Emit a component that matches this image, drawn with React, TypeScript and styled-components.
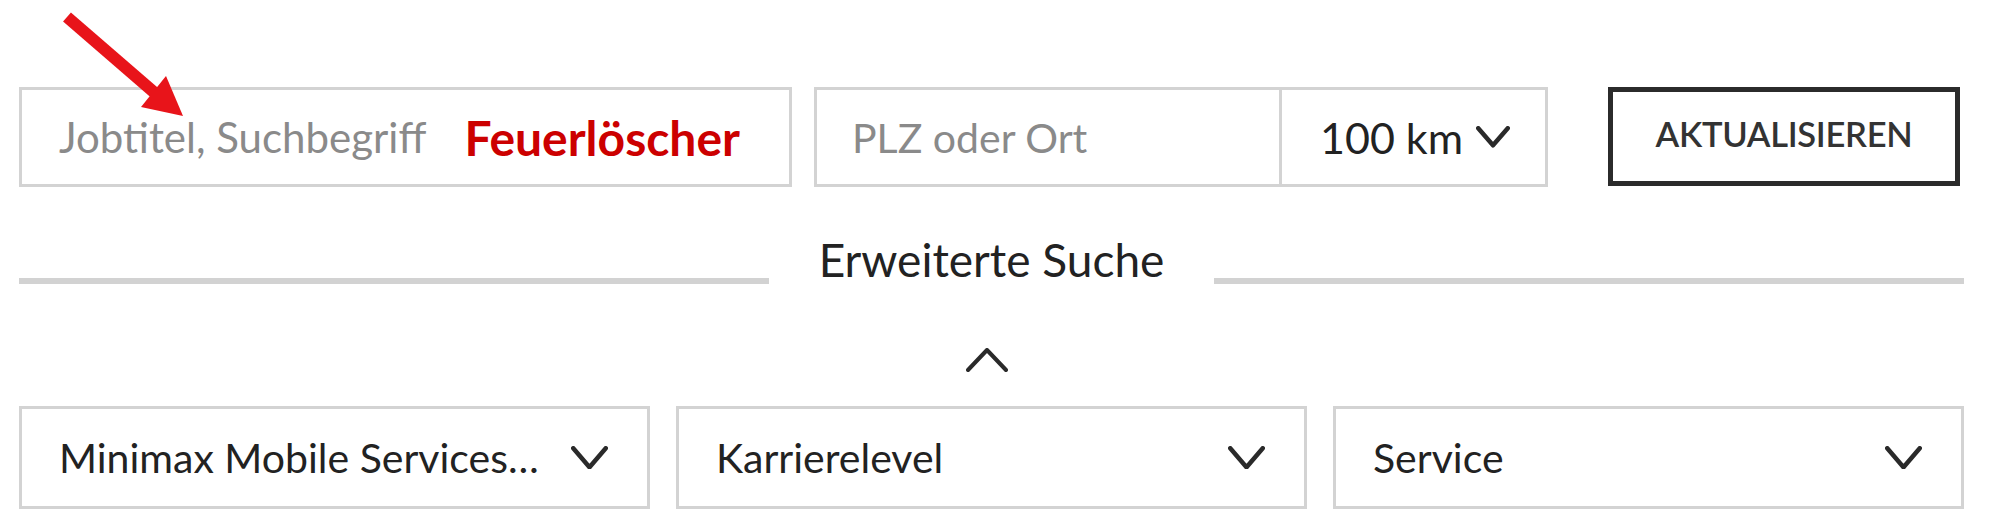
import React from "react";
import styled, { createGlobalStyle } from "styled-components";

const Global = createGlobalStyle`
  html, body { margin: 0; padding: 0; background: #ffffff; }
  body { font-family: "Lato", "Open Sans", sans-serif; color: #222222; }
  * { box-sizing: border-box; }
`;

const Page = styled.div`
  position: relative;
  width: 2000px;
  height: 532px;
  padding: 87px 0 0 19px;
  overflow: hidden;
`;

const Content = styled.div`
  width: 1945px;
  display: flex;
  flex-direction: column;
`;

const TopRow = styled.div`
  display: flex;
  align-items: stretch;
  height: 100px;
`;

const Field = styled.div<{ $w: number }>`
  width: ${(p) => p.$w}px;
  border: 3px solid #d3d3d3;
  display: flex;
  align-items: center;
  padding-left: 37px;
  font-size: 42px;
  white-space: nowrap;
`;

const Placeholder = styled.span`
  color: #8a8a8a;
`;

const Highlight = styled.span`
  color: #cc0000;
  font-weight: 700;
  font-size: 48px;
  margin-left: 38px;
`;

const LocationGroup = styled.div`
  display: flex;
  margin-left: 22px;
  border: 3px solid #d3d3d3;
`;

const LocationInput = styled.div`
  width: 465px;
  display: flex;
  align-items: center;
  padding-left: 35px;
  font-size: 41px;
  color: #8a8a8a;
  border-right: 3px solid #d3d3d3;
`;

const Radius = styled.div`
  width: 263px;
  display: flex;
  align-items: center;
  padding-left: 38px;
  gap: 13px;
  font-size: 43px;
  color: #222;
`;

const UpdateButton = styled.button`
  margin-left: 60px;
  width: 352px;
  height: 99px;
  border: 5px solid #2b2b2b;
  background: #fff;
  font-family: "Lato", sans-serif;
  font-weight: 600;
  font-size: 34.5px;
  color: #333;
  letter-spacing: -0.3px;
  padding: 0 0 6px 0;
`;

const DividerRow = styled.div`
  display: flex;
  align-items: center;
  margin-top: 42px;
  height: 60px;
`;

const Line = styled.div`
  flex: 1;
  height: 6px;
  background: #d2d2d2;
  margin-top: 44px;
`;

const DividerLabel = styled.div`
  font-size: 46px;
  color: #222;
  padding: 0 50px;
  white-space: nowrap;
`;

const ToggleRow = styled.div`
  display: flex;
  justify-content: center;
  padding-right: 10px;
  margin-top: 59px;
  height: 28px;
`;

const BottomRow = styled.div`
  display: grid;
  grid-template-columns: repeat(3, minmax(0, 1fr));
  gap: 26px;
  margin-top: 30px;
`;

const SelectBox = styled.div`
  min-width: 0;
  height: 103px;
  border: 3px solid #d3d3d3;
  display: flex;
  align-items: center;
  padding: 0 39px 0 37px;
  font-size: 41px;
  color: #222;
  gap: 12px;
`;

const SelectText = styled.span`
  flex: 1;
  min-width: 0;
  white-space: nowrap;
  overflow: hidden;
  text-overflow: ellipsis;
`;

const Chevron = ({ w = 37, h = 19, sw = 4.5, up = false }: { w?: number; h?: number; sw?: number; up?: boolean }) => (
  <svg width={w} height={h + sw} viewBox={`0 0 ${w} ${h + sw}`} style={{ flexShrink: 0 }}>
    <polyline
      points={
        up
          ? `${sw / 2},${h + sw / 2} ${w / 2},${sw / 2} ${w - sw / 2},${h + sw / 2}`
          : `${sw / 2},${sw / 2} ${w / 2},${h + sw / 2} ${w - sw / 2},${sw / 2}`
      }
      fill="none"
      stroke="#2a2a2a"
      strokeWidth={sw}
      strokeLinecap="round"
      strokeLinejoin="round"
    />
  </svg>
);

const ArrowOverlay = styled.svg`
  position: absolute;
  left: 0;
  top: 0;
  pointer-events: none;
`;

export default function App() {
  return (
    <>
      <Global />
      <Page>
        <ArrowOverlay width="220" height="140" viewBox="0 0 220 140">
          <line x1="67" y1="17" x2="156" y2="94" stroke="#e8141a" strokeWidth="12" />
          <polygon points="183,116 141,107 166,76" fill="#e8141a" />
        </ArrowOverlay>
        <Content>
          <TopRow>
            <Field $w={773}>
              <Placeholder>Jobtitel, Suchbegriff</Placeholder>
              <Highlight>Feuerlöscher</Highlight>
            </Field>
            <LocationGroup>
              <LocationInput>PLZ oder Ort</LocationInput>
              <Radius>
                100 km
                <Chevron w={34} h={17} sw={4.5} />
              </Radius>
            </LocationGroup>
            <UpdateButton>AKTUALISIEREN</UpdateButton>
          </TopRow>
          <DividerRow>
            <Line />
            <DividerLabel>Erweiterte Suche</DividerLabel>
            <Line />
          </DividerRow>
          <ToggleRow>
            <Chevron w={42} h={20} sw={4} up />
          </ToggleRow>
          <BottomRow>
            <SelectBox>
              <SelectText>Minimax Mobile Services…</SelectText>
              <Chevron />
            </SelectBox>
            <SelectBox>
              <SelectText>Karrierelevel</SelectText>
              <Chevron />
            </SelectBox>
            <SelectBox>
              <SelectText>Service</SelectText>
              <Chevron />
            </SelectBox>
          </BottomRow>
        </Content>
      </Page>
    </>
  );
}
